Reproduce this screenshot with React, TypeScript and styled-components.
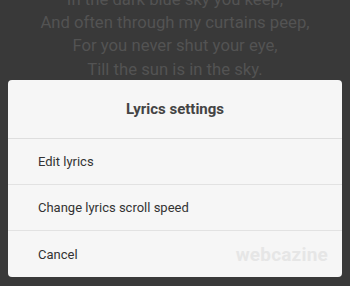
import React from "react";
import styled, { createGlobalStyle } from "styled-components";

const Global = createGlobalStyle`
  html, body { margin: 0; padding: 0; }
  body { background: #393939; font-family: Roboto, "Noto Sans", sans-serif; }
`;

const Screen = styled.div`
  position: relative;
  width: 350px;
  height: 286px;
  overflow: hidden;
  background: #393939;
`;

const Lyrics = styled.div`
  display: flex;
  flex-direction: column;
  align-items: center;
  margin-top: -12px;
`;

const Line = styled.div`
  font-size: 16.7px;
  line-height: 23.2px;
  color: #535353;
  white-space: nowrap;
`;

const Sheet = styled.div`
  position: absolute;
  left: 8px;
  right: 8px;
  bottom: 9px;
  background: #f6f6f6;
  border-radius: 4px;
  display: flex;
  flex-direction: column;
`;

const Title = styled.div`
  height: 59px;
  display: flex;
  align-items: center;
  justify-content: center;
  font-size: 15px;
  font-weight: 700;
  color: #444;
  border-bottom: 1px solid #dedede;
  box-sizing: border-box;
`;

const Item = styled.div<{ $last?: boolean }>`
  position: relative;
  height: 46px;
  display: flex;
  align-items: center;
  padding-left: 30px;
  font-size: 13px;
  color: #333;
  box-sizing: border-box;
  border-bottom: ${(p) => (p.$last ? "none" : "1px solid #e2e2e2")};
`;

const Watermark = styled.span`
  position: absolute;
  right: 14px;
  top: 50%;
  transform: translateY(-50%);
  font-size: 19px;
  font-weight: 700;
  color: #e6e6e6;
  letter-spacing: 0.2px;
`;

export default function App() {
  return (
    <>
      <Global />
      <Screen>
        <Lyrics>
          <Line>In the dark blue sky you keep,</Line>
          <Line>And often through my curtains peep,</Line>
          <Line>For you never shut your eye,</Line>
          <Line>Till the sun is in the sky.</Line>
        </Lyrics>
        <Sheet>
          <Title>Lyrics settings</Title>
          <Item>Edit lyrics</Item>
          <Item>Change lyrics scroll speed</Item>
          <Item $last>
            Cancel
            <Watermark>webcazine</Watermark>
          </Item>
        </Sheet>
      </Screen>
    </>
  );
}
